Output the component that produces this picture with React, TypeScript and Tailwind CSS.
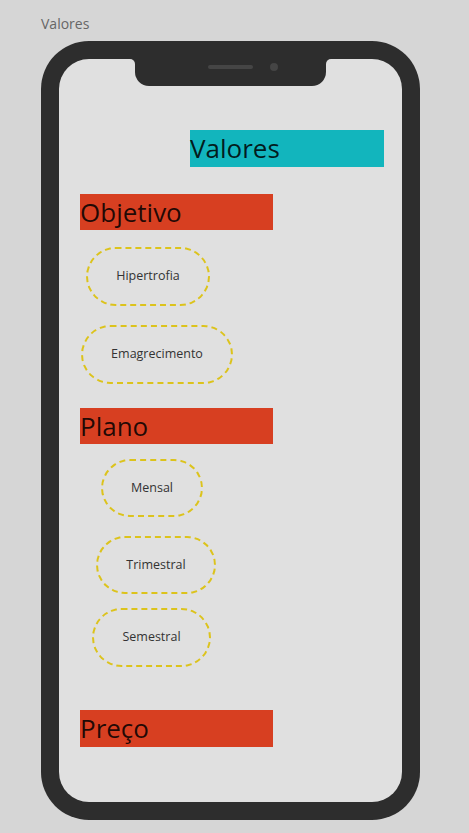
import * as React from 'react';

const font = { fontFamily: '"Open Sans", "Noto Sans", sans-serif' };

interface PillProps {
    label: string;
    className: string;
}

const Pill: React.FC<PillProps> = ({ label, className }: PillProps) => (
    <div
        className={`flex items-center justify-center border-2 border-dashed border-[#dcc31c] rounded-[30px] text-[12.5px] text-[#333] ${className}`}
    >
        {label}
    </div>
);

const Heading: React.FC<{ label: string; className?: string }> = ({ label, className }) => (
    <div className={`w-[193px] h-[36px] bg-[#d73f21] text-[26px] leading-[36px] text-black/85 ${className ?? ''}`}>
        {label}
    </div>
);

export default function App() {
    return (
        <div className="w-[469px] min-h-[833px] bg-[#d6d6d6] pl-[41px] pt-[14px]" style={font}>
            <div className="text-[14px] leading-[20px] text-[#666]">Valores</div>

            {/* phone frame */}
            <div className="mt-[7px] w-[379px] h-[779px] rounded-[48px] bg-[#2d2d2d] p-[18px]">
                <div className="relative h-full rounded-[30px] bg-[#e0e0e0] flex flex-col">
                    {/* notch */}
                    <div className="absolute left-[76px] top-0 w-[191px] h-[27px] bg-[#2d2d2d] rounded-b-[14px]">
                        <div className="absolute left-[73px] top-[6px] w-[45px] h-[4px] rounded-full bg-[#454545]" />
                        <div className="absolute left-[135px] top-[4px] w-[8px] h-[8px] rounded-full bg-[#454545]" />
                    </div>
                    <div className="absolute left-[71px] top-0 w-[5px] h-[5px] bg-[#2d2d2d]">
                        <div className="w-full h-full rounded-tr-[5px] bg-[#e0e0e0]" />
                    </div>
                    <div className="absolute left-[267px] top-0 w-[5px] h-[5px] bg-[#2d2d2d]">
                        <div className="w-full h-full rounded-tl-[5px] bg-[#e0e0e0]" />
                    </div>

                    <div className="ml-[131px] mt-[71px] w-[194px] h-[37px] bg-[#12b5bd] text-[26px] leading-[37px] text-black/85">
                        Valores
                    </div>

                    <Heading label="Objetivo" className="ml-[21px] mt-[27px]" />
                    <Pill label="Hipertrofia" className="ml-[27px] mt-[17px] w-[124px] h-[59px]" />
                    <Pill label="Emagrecimento" className="ml-[22px] mt-[19px] w-[152px] h-[59px]" />

                    <Heading label="Plano" className="ml-[21px] mt-[24px]" />
                    <Pill label="Mensal" className="ml-[42px] mt-[15px] w-[102px] h-[58px]" />
                    <Pill label="Trimestral" className="ml-[37px] mt-[19px] w-[120px] h-[58px]" />
                    <Pill label="Semestral" className="ml-[33px] mt-[14px] w-[119px] h-[59px]" />

                    <Heading label="Preço" className="ml-[21px] mt-[43px] h-[37px] leading-[37px]" />
                </div>
            </div>
        </div>
    );
}
